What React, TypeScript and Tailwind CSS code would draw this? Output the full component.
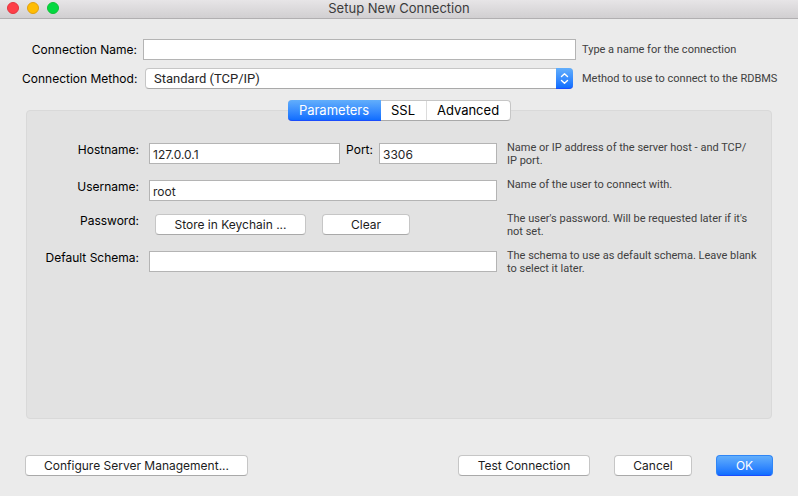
import React, { useState } from 'react';

const TABS = [
  { label: 'Parameters', width: 'w-[93px]' },
  { label: 'SSL', width: 'w-[46px]' },
  { label: 'Advanced', width: 'w-[83px]' },
];

const inputStyle =
  'h-[21px] w-full min-w-0 border border-[#b4b4b4] bg-white px-[3px] pt-[2px] text-[12px] leading-4 text-[#262626] outline-none';

type PushButtonProps = {
  children: React.ReactNode;
  className?: string;
  primary?: boolean;
  onClick?: () => void;
};

const PushButton: React.FC<PushButtonProps> = ({ children, className, primary, onClick }) => {
  const colors = primary
    ? 'border-[#2f86f6] border-b-[#1a4dfc] bg-linear-to-b from-[#62aefb] to-[#0f6dff] text-white'
    : 'border-[#c6c6c6] border-b-[#a9a9a9] bg-white text-[#1c1c1c]';
  return (
    <button
      type="button"
      onClick={onClick}
      className={`h-[21px] shrink-0 whitespace-nowrap rounded-[4px] border text-center text-[12px] leading-[18px] ${colors} ${className ?? ''}`}
    >
      {children}
    </button>
  );
};

const Tip: React.FC<{ children: React.ReactNode; className?: string }> = ({ children, className }) => (
  <p className={`font-['Roboto',sans-serif] text-[11px] leading-[13px] text-[#404040] ${className ?? ''}`}>{children}</p>
);

// Right-aligned label in front of a form field
const FieldLabel: React.FC<{ htmlFor?: string; children: React.ReactNode }> = ({ htmlFor, children }) => (
  <label htmlFor={htmlFor} className="whitespace-nowrap pt-px text-right text-[12px] leading-4 text-black">
    {children}
  </label>
);

const TitleBar: React.FC = () => (
  <header className="grid h-[19px] grid-cols-[1fr_auto_1fr] items-center border-b border-[#b1afb1] bg-linear-to-b from-[#e7e5e7] to-[#d1cfd1]">
    <div className="flex gap-2 pl-[7px] pb-[2px]">
      <button type="button" aria-label="Close" className="size-3 rounded-full border border-[#e2343f] bg-[#fe3e48]" />
      <button type="button" aria-label="Minimize" className="size-3 rounded-full border border-[#e0a010] bg-[#ffbd04]" />
      <button type="button" aria-label="Zoom" className="size-3 rounded-full border border-[#0fc037] bg-[#03d940]" />
    </div>
    <h1 className="pb-[2px] text-[13px] leading-4 text-[#3b3b3b]">Setup New Connection</h1>
  </header>
);

export default function App() {
  const [tab, setTab] = useState('Parameters');
  const [name, setName] = useState('');
  const [host, setHost] = useState('127.0.0.1');
  const [port, setPort] = useState('3306');
  const [user, setUser] = useState('root');
  const [schema, setSchema] = useState('');

  return (
    <div className="flex min-h-screen flex-col bg-[#ebebeb] font-['Inter',sans-serif]">
      <TitleBar />

      <div className="grid grid-cols-[115px_1fr_194px] items-center gap-x-[6px] gap-y-2 px-[22px] pt-5">
        <FieldLabel htmlFor="name">Connection Name:</FieldLabel>
        <input id="name" className={inputStyle} value={name} onChange={(e) => setName(e.target.value)} />
        <Tip className="whitespace-nowrap">Type a name for the connection</Tip>

        <FieldLabel htmlFor="method">Connection Method:</FieldLabel>
        <div className="relative ml-[2px] mr-[3px]">
          <select
            id="method"
            className="block h-[21px] w-full appearance-none rounded-[4px] border border-[#c6c6c6] border-b-[#a9a9a9] bg-white pl-2 font-['Roboto',sans-serif] text-[13px] leading-4 text-[#262626] outline-none"
          >
            <option>Standard (TCP/IP)</option>
          </select>
          <span className="pointer-events-none absolute inset-y-0 right-0 flex w-[17px] items-center justify-center rounded-r-[4px] border-b border-[#1a4dfc] bg-linear-to-b from-[#62aefb] to-[#0f6dff]">
            <svg width="9" height="13" viewBox="0 0 9 13" fill="none" stroke="white" strokeWidth="1.4" strokeLinecap="round" strokeLinejoin="round">
              <path d="M1.5 4.5 4.5 1.7 7.5 4.5M1.5 8.5 4.5 11.3 7.5 8.5" />
            </svg>
          </span>
        </div>
        <Tip className="whitespace-nowrap">Method to use to connect to the RDBMS</Tip>
      </div>

      <main className="mx-[26px] mt-[11px] flex flex-1 flex-col">
        <div role="tablist" className="z-10 flex self-center rounded-[4px] border border-[#c6c6c6] border-b-[#a9a9a9] bg-white">
          {TABS.map(({ label, width }) => (
            <button
              key={label}
              type="button"
              role="tab"
              aria-selected={tab === label}
              onClick={() => setTab(label)}
              className={
                tab === label
                  ? `-my-px -ml-px h-[21px] rounded-l-[4px] border-b border-[#1a4dfc] bg-linear-to-b from-[#62aefb] to-[#0f6dff] text-[13px] leading-5 text-white ${width}`
                  : `h-[19px] border-r border-[#dcdcdc] text-[13px] leading-[19px] text-black last:border-r-0 ${width}`
              }
            >
              {label}
            </button>
          ))}
        </div>

        <section className="-mt-[11px] flex-1 rounded-[4px] border border-[#d9d9d9] bg-[#e2e2e2] pt-[30px]">
          <div className="grid grid-cols-[112px_348fr_252fr] items-start gap-x-[10px] gap-y-[11px] pr-[12px]">
            <FieldLabel htmlFor="host">Hostname:</FieldLabel>
            <div className="flex items-start gap-[6px] pt-[2px]">
              <input id="host" className={inputStyle} value={host} onChange={(e) => setHost(e.target.value)} />
              <label htmlFor="port" className="text-[12px] leading-[14px] text-black">
                Port:
              </label>
              <div className="flex w-[118px] shrink-0">
                <input id="port" className={inputStyle} value={port} onChange={(e) => setPort(e.target.value)} />
              </div>
            </div>
            <Tip>
              Name or IP address of the server host - and TCP/
              <br />
              IP port.
            </Tip>

            <FieldLabel htmlFor="user">Username:</FieldLabel>
            <div className="flex pt-[2px]">
              <input id="user" className={inputStyle} value={user} onChange={(e) => setUser(e.target.value)} />
            </div>
            <Tip>Name of the user to connect with.</Tip>

            <FieldLabel htmlFor="password">Password:</FieldLabel>
            <div id="password" className="flex gap-4 pl-[6px] pt-[2px]">
              <PushButton className="w-[151px]">Store in Keychain ...</PushButton>
              <PushButton className="w-[88px]">Clear</PushButton>
            </div>
            <Tip>The user's password. Will be requested later if it's not set.</Tip>

            <FieldLabel htmlFor="schema">Default Schema:</FieldLabel>
            <div className="flex pt-[2px]">
              <input id="schema" className={inputStyle} value={schema} onChange={(e) => setSchema(e.target.value)} />
            </div>
            <Tip>The schema to use as default schema. Leave blank to select it later.</Tip>
          </div>
        </section>
      </main>

      <footer className="flex gap-6 px-[25px] pb-5 pt-9">
        <PushButton className="mr-auto w-[223px]">Configure Server Management...</PushButton>
        <PushButton className="w-[132px]">Test Connection</PushButton>
        <PushButton className="w-[78px]">Cancel</PushButton>
        <PushButton primary className="w-[57px]">
          OK
        </PushButton>
      </footer>
    </div>
  );
}
